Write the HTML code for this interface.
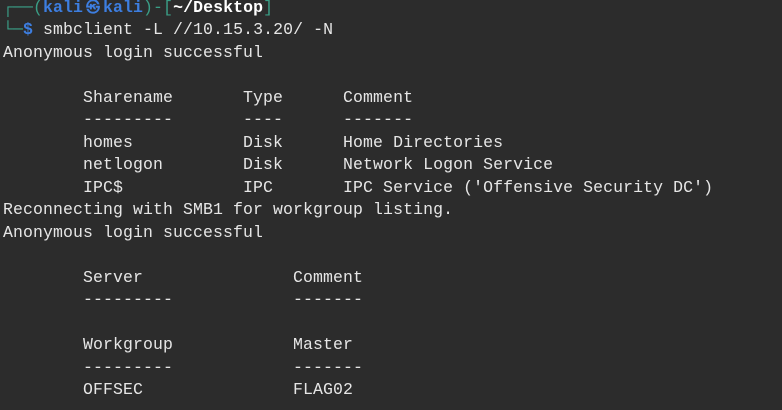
<!DOCTYPE html>
<html><head><style>
html,body{margin:0;padding:0;background:#2c2c2c;width:782px;height:410px;overflow:hidden}
pre{margin:0;padding:0;position:absolute;left:3px;top:-3px;font-family:"Liberation Mono",monospace;font-size:16.5px;letter-spacing:0.1px;line-height:22.47px;color:#e6e6e6}
.g{color:#3a9e86}.b{color:#3d7ee0;font-weight:bold}.w{color:#fff;font-weight:bold}
.s{display:inline-block;width:20px;text-align:center;font-size:14px;font-family:"DejaVu Sans",sans-serif}
</style></head><body>
<pre><span class="g">┌──(</span><span class="b">kali<span class="s">㉿</span>kali</span><span class="g">)-[</span><span class="w">~/Desktop</span><span class="g">]</span>
<span class="g">└─</span><span class="b">$</span> smbclient -L //10.15.3.20/ -N
Anonymous login successful

        Sharename       Type      Comment
        ---------       ----      -------
        homes           Disk      Home Directories
        netlogon        Disk      Network Logon Service
        IPC$            IPC       IPC Service ('Offensive Security DC')
Reconnecting with SMB1 for workgroup listing.
Anonymous login successful

        Server               Comment
        ---------            -------

        Workgroup            Master
        ---------            -------
        OFFSEC               FLAG02
</pre>
</body></html>
